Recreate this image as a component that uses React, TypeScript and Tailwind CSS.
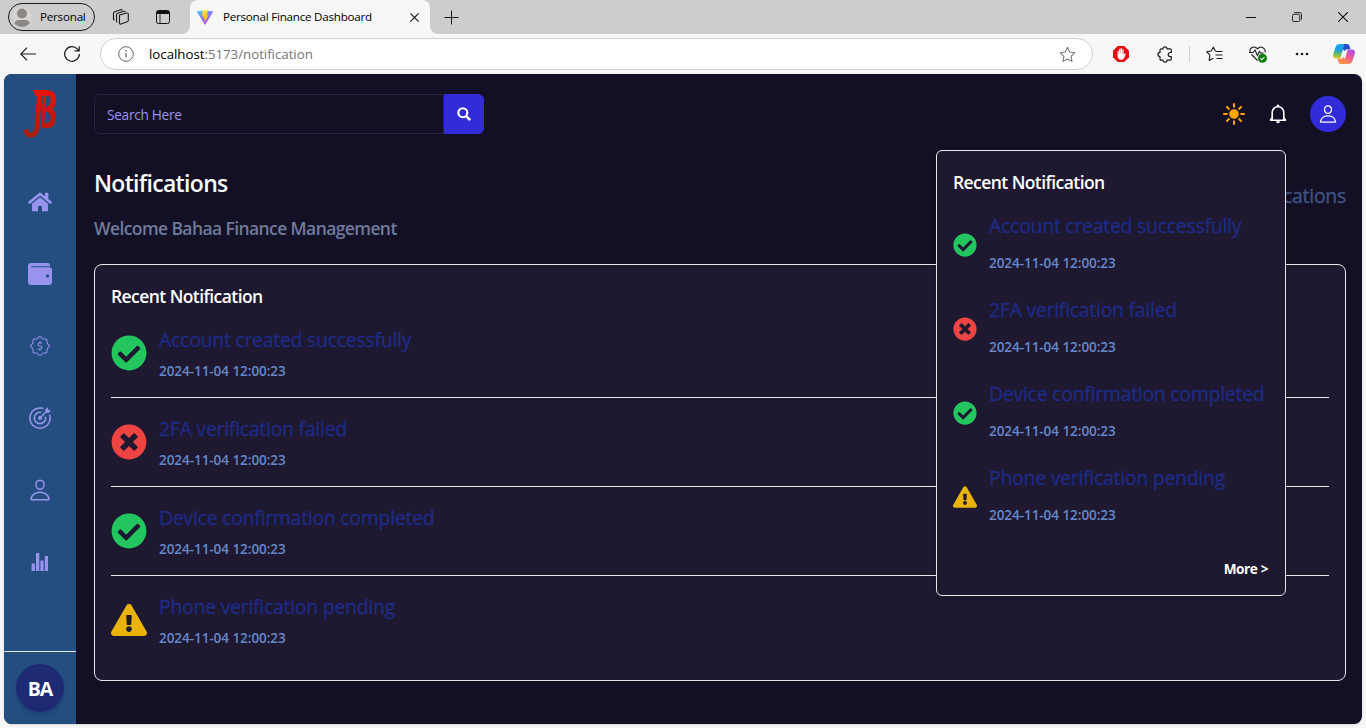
import type { ReactNode } from "react";
import { FaHome, FaCheckCircle, FaTimesCircle, FaExclamationTriangle } from "react-icons/fa";
import { IoPersonOutline, IoSunnySharp } from "react-icons/io5";
import { GoGoal } from "react-icons/go";
import { CiBadgeDollar } from "react-icons/ci";

type Kind = "success" | "error" | "warning";

const notifications: { title: string; date: string; kind: Kind }[] = [
  { title: "Account created successfully", date: "2024-11-04 12:00:23", kind: "success" },
  { title: "2FA verification failed", date: "2024-11-04 12:00:23", kind: "error" },
  { title: "Device confirmation completed", date: "2024-11-04 12:00:23", kind: "success" },
  { title: "Phone verification pending", date: "2024-11-04 12:00:23", kind: "warning" },
];

function StatusIcon({ kind, size }: { kind: Kind; size: number }) {
  if (kind === "success") return <FaCheckCircle size={size} className="shrink-0 text-[#22c55e]" />;
  if (kind === "error") return <FaTimesCircle size={size} className="shrink-0 text-[#ef4444]" />;
  return <FaExclamationTriangle size={size} className="shrink-0 text-[#eab308]" />;
}

function TabBar() {
  return (
    <div className="flex h-[34px] shrink-0 items-center bg-[#cdcdcd] text-black">
      <div className="ml-2 flex h-7 w-[87px] items-center rounded-full border border-[#1b1b1b] pl-[3px]">
        <svg width="20" height="20" viewBox="0 0 20 20">
          <defs>
            <clipPath id="avatar"><circle cx="10" cy="10" r="10" /></clipPath>
          </defs>
          <g clipPath="url(#avatar)">
            <rect width="20" height="20" fill="#d8d4d0" />
            <circle cx="10" cy="6.5" r="5" fill="#8a8886" />
            <path d="M2 18c0-3 2-5 5-5h6c3 0 5 2 5 5v2H2z" fill="#8a8886" />
          </g>
        </svg>
        <span className="ml-2 text-[11.6px] tracking-[-0.2px]">Personal</span>
      </div>
      <svg className="ml-[17px]" width="18" height="18" viewBox="0 0 18 18" fill="none" stroke="#1b1b1b" strokeWidth="1.1" strokeLinejoin="round">
        <path d="M7.5 7 15 5a1 1 0 0 1 1.3.8v6.700a1.5 1.5 0 0 1-1 1.3L9 16a1 1 0 0 1-1.5-1z" />
        <path d="M5.500 14a1 1 0 0 1-1-1V6.500a1.500 1.500 0 0 1 1-1.300L12 3.300a1 1 0 0 1 1.300.8M2.500 12a1 1 0 0 1-1-1V5a1.500 1.500 0 0 1 1-1.300L9 1.700a1 1 0 0 1 1.300.8" />
      </svg>
      <svg className="ml-[26px]" width="14" height="14" viewBox="0 0 14 14" fill="none" stroke="#111">
        <rect x="0.5" y="0.5" width="13" height="13" rx="2" />
        <path d="M1 2.500h12" strokeWidth="3" />
        <path d="M4 4v9" strokeWidth="0.8" />
      </svg>
      <div className="relative ml-5 flex h-full w-[240px] items-center rounded-t-lg bg-[#f7f7f7]">
        <svg className="absolute bottom-0 -left-2" width="8" height="8"><path d="M8 0v8H0a8 8 0 0 0 8-8" fill="#f7f7f7" /></svg>
        <svg className="absolute -right-2 bottom-0" width="8" height="8"><path d="M0 0v8h8a8 8 0 0 1-8-8" fill="#f7f7f7" /></svg>
        <svg className="ml-[7px]" width="16" height="16" viewBox="0 0 16 16">
          <defs>
            <linearGradient id="v1" x1="0" y1="0" x2="0.6" y2="1">
              <stop stopColor="#41d1ff" /><stop offset="1" stopColor="#bd34fe" />
            </linearGradient>
            <linearGradient id="v2" x1="0" y1="0" x2="0" y2="1">
              <stop stopColor="#ffea83" /><stop offset="0.2" stopColor="#ffdd35" /><stop offset="1" stopColor="#ffa800" />
            </linearGradient>
          </defs>
          <path d="M.3 2.300 8 1.400l7.700.9c.3 0 .4.4.3.6L8.300 15.500c-.1.300-.5.300-.6 0L0 2.900c-.1-.2 0-.6.3-.6" fill="url(#v1)" />
          <path d="m11 .4-5.500 1.100-.4 6.300 1.700-.3-.4 2.500 1.400-.4-.4 4.500 4.300-8.100-2 .4z" fill="url(#v2)" />
        </svg>
        <span className="ml-[10px] text-[11.6px] tracking-[-0.22px] whitespace-nowrap">Personal Finance Dashboard</span>
        <svg className="mr-[11px] ml-auto" width="9" height="9" viewBox="0 0 9 9" stroke="#1b1b1b" strokeWidth="1.2"><path d="m.4.4 8.200 8.200M8.600.4.4 8.600" /></svg>
      </div>
      <svg className="ml-[14px]" width="15" height="15" viewBox="0 0 15 15" stroke="#111"><path d="M.5 7.500h14M7.500.5v14" /></svg>
      <div className="ml-auto flex">
        <Slot><svg width="10" height="10" stroke="#111"><path d="M0 5.500h10" /></svg></Slot>
        <Slot>
          <svg width="10" height="10" viewBox="0 0 11 11" fill="none" stroke="#111">
            <rect x="0.5" y="2.500" width="8" height="8" rx="1.500" />
            <path d="M2.500.5H8A2.500 2.500 0 0 1 10.500 3v5.500" />
          </svg>
        </Slot>
        <Slot><svg width="10" height="10" viewBox="0 0 10 10" stroke="#111" strokeWidth="1.1"><path d="m0 0 10 10M10 0 0 10" /></svg></Slot>
      </div>
    </div>
  );
}

function Slot({ children }: { children: ReactNode }) {
  return <div className="flex w-[46px] items-center justify-center">{children}</div>;
}

function ToolSlot({ children }: { children: ReactNode }) {
  return <div className="flex w-11 shrink-0 items-center justify-center">{children}</div>;
}

const starPath = "M8 1.200l2.100 4.400 4.700.7-3.400 3.400.8 4.800L8 12.200l-4.200 2.300.8-4.800L1.200 6.300l4.700-.7z";

function Toolbar() {
  return (
    <div className="flex h-10 shrink-0 items-center bg-[#f7f7f7]">
      <svg className="ml-5" width="16" height="14" viewBox="0 0 16 14" fill="none" stroke="#1b1b1b" strokeWidth="1.1"><path d="M16 7H.8M7 .6.8 7 7 13.400" /></svg>
      <svg className="ml-7" width="16" height="16" viewBox="0 0 16 16" fill="none" stroke="#1b1b1b" strokeWidth="1.2">
        <path d="M15.300 8A7.300 7.300 0 1 1 13.500 3.200L15 4.800M15.200.3v4.600h-4.600" />
      </svg>
      <div className="ml-5 flex h-8 w-[993px] shrink-0 items-center rounded-full border border-[#d0d0d0] bg-white pr-4 pl-[17px]">
        <svg width="16" height="16" viewBox="0 0 16 16" fill="none" stroke="#6b6b6b">
          <circle cx="8" cy="8" r="7.300" /><path d="M8 7v4.500" strokeWidth="1.300" /><path d="M8 4.200v1.500" strokeWidth="1.500" />
        </svg>
        <span className="ml-[15px] pt-[2px] text-[13.3px] tracking-[-0.03px] text-[#767676]"><span className="text-black">localhost</span>:5173/notification</span>
        <svg className="ml-auto" width="17" height="17" viewBox="0 0 16 16" fill="none" stroke="#777" strokeLinejoin="round"><path d={starPath} /></svg>
      </div>
      <div className="ml-[6px] flex items-center">
        <ToolSlot>
          <svg width="16" height="16" viewBox="0 0 16 16">
            <path d="M4.700 0h6.600L16 4.700v6.600L11.300 16H4.700L0 11.300V4.700z" fill="#e40d12" />
            <path d="M4.500 5v4.500c0 2.500 1.300 4.200 3.700 4.200 2 0 2.900-1.300 3.700-3.500l.9-2.500-1.200-.3-1 1.600V3.300H9.400v3.900H9V2.300H7.700v4.900h-.3V3H6.100v4.700h-.4V5z" fill="#fff" />
          </svg>
        </ToolSlot>
        <ToolSlot>
          <svg width="16" height="17" viewBox="0 0 16 17" fill="none" stroke="#1b1b1b" strokeWidth="1.2" strokeLinejoin="round">
            <path d="M6 2.800a2 2 0 0 1 4 0h3a1.300 1.300 0 0 1 1.300 1.300V6.500h-1a2 2 0 0 0 0 4.200h1v2.200a1.300 1.300 0 0 1-1.300 1.300h-3a2 2 0 0 1-4 0H4.300A1.300 1.300 0 0 1 3 12.900v-2.300a2.100 2.100 0 0 1 0-4.200V4.100a1.300 1.300 0 0 1 1.300-1.300z" />
          </svg>
        </ToolSlot>
        <div className="mr-[2px] ml-[2px] h-4 w-px bg-[#cfcfcf]" />
        <ToolSlot>
          <svg width="17" height="16" viewBox="0 0 17 16" fill="none" stroke="#1b1b1b" strokeWidth="1.1" strokeLinejoin="round">
            <path d="M10 5.200 9.400 5 7.300 1.200 5.200 5l-4.500.8 3.200 3.400-.7 5.200 4.200-2.200M10 5.500h6.500M9.500 9h7M10.500 12.500h6" />
          </svg>
        </ToolSlot>
        <ToolSlot>
          <svg width="18" height="17" viewBox="0 0 18 17" fill="none" stroke="#1b1b1b" strokeWidth="1.1">
            <path d="M1.200 6C-.2 2.500 5.200-1.200 8.500 2.800c3.300-4 8.700-.3 7.500 3.700M2.500 8.500l6 6M0 6.500h4l2-2.500 2.500 5.500 2-4 1 1.500h3" />
            <circle cx="13.500" cy="12.300" r="4.500" fill="#107c10" stroke="none" />
            <path d="m11.500 12.400 1.400 1.400 2.600-2.800" stroke="#fff" />
          </svg>
        </ToolSlot>
        <ToolSlot>
          <svg width="14" height="4" fill="#1b1b1b"><circle cx="2" cy="2" r="1.300" /><circle cx="7" cy="2" r="1.300" /><circle cx="12" cy="2" r="1.300" /></svg>
        </ToolSlot>
        <div className="flex w-[40px] shrink-0 justify-center">
          <svg width="22" height="20" viewBox="0 0 22 20">
            <defs>
              <linearGradient id="c1" x1="0.3" y1="0" x2="0.2" y2="1"><stop stopColor="#1aa7ee" /><stop offset="0.4" stopColor="#1b9ddc" /><stop offset="0.7" stopColor="#66c15c" /><stop offset="1" stopColor="#f2c414" /></linearGradient>
              <linearGradient id="c2" x1="0.8" y1="0" x2="0.3" y2="1"><stop stopColor="#a14de8" /><stop offset="0.5" stopColor="#ee5a92" /><stop offset="1" stopColor="#ff9a52" /></linearGradient>
            </defs>
            <path d="M6.500 0h8L10 5.500 7.300 14.500H3C.6 14.500-.3 12.700.3 10L2.700 2.800C3.300 1 4.700 0 6.500 0" fill="url(#c1)" />
            <path d="M11.500 0h2.500c1.500 0 2.200 1 2.700 2.500l.8 2.700h-3c-1.500 0-2.200.5-2.700 2L9.800 5z" fill="#2450c8" />
            <path d="M15.500 20h-8L12 14.500l2.700-9H19c2.400 0 3.300 1.800 2.700 4.500l-2.400 7.200c-.6 1.800-2 2.800-3.800 2.800" fill="url(#c2)" />
            <path d="M10.500 20H8c-1.500 0-2.200-1-2.700-2.500l-.8-2.700h3c1.500 0 2.200-.5 2.700-2l2 2.200z" fill="#ff8a4c" />
          </svg>
        </div>
      </div>
    </div>
  );
}

function Logo() {
  return (
    <svg width="36" height="50" viewBox="0 0 36 50" fill="none" stroke="url(#logo)" strokeLinejoin="round">
      <defs>
        <linearGradient id="logo" gradientUnits="userSpaceOnUse" x1="0" y1="0" x2="0" y2="50"><stop stopColor="#e81600" /><stop offset="1" stopColor="#a81c10" /></linearGradient>
      </defs>
      <path d="M10.800 2H26v6H13.500z" fill="url(#logo)" stroke="none" />
      <path d="M25 4.800Q31.300 4.800 31.300 11.500 31.300 19 26 21.500 31.300 23.500 31.300 29.500 31.300 37.600 24.500 37.600H20" strokeWidth="5.3" />
      <path d="M22.500 8.500 20.500 39.500" strokeWidth="3" />
      <path d="M21.500 21.500H27" strokeWidth="4.2" />
      <path d="M17.500 7 15 39.500C14.500 45 11.500 47.300 8 47.300Q4.500 47 4.300 41.500" strokeWidth="4.8" />
    </svg>
  );
}

function WalletIcon() {
  return (
    <svg width="24" height="22" viewBox="0 0 24 22" fill="currentColor">
      <path
        fillRule="evenodd"
        d="M3 0h16.500A2.500 2.500 0 0 1 22 2.500v.7H3.600a.5.5 0 0 0 0 1H21a3 3 0 0 1 3 3V19a3 3 0 0 1-3 3H3a3 3 0 0 1-3-3V3a3 3 0 0 1 3-3M19.500 11.200a1.700 1.700 0 1 0 0 3.400 1.700 1.700 0 0 0 0-3.400"
      />
    </svg>
  );
}

function StatsIcon() {
  return (
    <svg width="18" height="18" viewBox="0 0 18 18" fill="currentColor">
      <path d="M.6 10.500h3.300V18H.6zM5 0h3.300v18H5zM9.400 7.500h3.200V18H9.400zM13.800 3H17v15h-3.200z" />
    </svg>
  );
}

function Sidebar() {
  const items = [
    <FaHome size={24} />,
    <WalletIcon />,
    <CiBadgeDollar size={24} />,
    <GoGoal size={24} />,
    <IoPersonOutline size={24} />,
    <StatsIcon />,
  ];
  return (
    <aside className="flex w-[72px] shrink-0 flex-col items-center bg-[#244d80] text-[#9894ee]">
      <div className="mt-[14px] h-[50px]"><Logo /></div>
      <nav className="mt-7 flex flex-col">
        {items.map((icon, i) => (
          <div key={i} className="flex h-[72px] items-center justify-center">{icon}</div>
        ))}
      </nav>
      <div className="mt-auto flex h-[73px] w-full items-center justify-center border-t border-[#e5e7eb]">
        <div className="flex size-12 items-center justify-center rounded-full bg-[#1f2a74] pt-[2px] text-[19.5px] font-bold tracking-[-1px] text-white shadow-md">BA</div>
      </div>
    </aside>
  );
}

function Header() {
  return (
    <header className="flex h-20 shrink-0 items-center">
      <div className="flex h-10 w-[390px]">
        <div className="flex h-10 w-[350px] items-center rounded-l-md border border-[#27243d] pt-[2px] pl-3 text-[13.7px] tracking-[-0.3px] text-[#9894ee]">Search Here</div>
        <div className="flex w-10 items-center justify-center rounded-r-md bg-[#312cd8]">
          <svg width="14" height="14" viewBox="0 0 14 14" fill="none" stroke="#fff" strokeWidth="2.1"><circle cx="5.800" cy="5.700" r="4.500" /><path d="m9 9 4.200 4.100" strokeWidth="2.500" /></svg>
        </div>
      </div>
      <IoSunnySharp size={24} className="ml-auto text-[#ffa500]" />
      <svg className="ml-[22px]" width="20" height="20" viewBox="0 0 20 20" fill="none" stroke="#fff" strokeWidth="1.6">
        <path d="M4.200 15.500V8.500a5.800 5.800 0 0 1 11.600 0v7M2 16.200h16" />
        <path d="M8.500 2.500a1.500 2 0 0 1 3 0zM8 17.200h4a2 2 0 0 1-4 0" fill="#fff" stroke="none" />
        <path d="M2 16.300 4.300 13.500M18 16.300l-2.300-2.800" strokeWidth="1.200" />
      </svg>
      <div className="ml-[22px] flex size-9 items-center justify-center rounded-full bg-[#312cd8] text-white"><IoPersonOutline size={20} /></div>
    </header>
  );
}

function NotificationPopup() {
  return (
    <div className="absolute top-[76px] right-[76px] flex h-[446px] w-[350px] flex-col rounded-md border border-[#e5e7eb] bg-[#1e1931] px-4 shadow-md">
      <h4 className="mt-[17px] text-[17.5px] leading-7 font-semibold tracking-[-0.57px] text-white">Recent Notification</h4>
      <ul className="mt-[7px]">
        {notifications.map((n) => (
          <li key={n.title} className="flex h-[84px] items-center gap-3">
            <StatusIcon kind={n.kind} size={24} />
            <div className="pb-[6px]">
              <p className="text-[19.5px] leading-7 tracking-[-0.29px] whitespace-nowrap text-[#1f2b86] [-webkit-text-stroke:0.3px_#1f2b86]">{n.title}</p>
              <p className="mt-[13px] text-[13.5px] leading-5 font-semibold tracking-[-0.05px] text-[#6688c8]">{n.date}</p>
            </div>
          </li>
        ))}
      </ul>
      <div className="mt-[20px] pr-px text-right text-[13.6px] leading-5 font-bold tracking-[-0.4px] text-white">More &gt;</div>
    </div>
  );
}

export default function App() {
  return (
    <div className="flex h-[728px] w-[1366px] flex-col overflow-hidden bg-[#f7f7f7] font-['Open_Sans',sans-serif]">
      <TabBar />
      <Toolbar />
      <div className="relative mx-1 flex h-[650px] shrink-0 overflow-hidden rounded-lg bg-[#131026] shadow-sm">
        <Sidebar />
        <main className="flex flex-1 flex-col pr-4 pl-[18px]">
          <Header />
          <div className="flex justify-between">
            <div className="pt-[13px]">
              <h2 className="text-[23px] leading-8 font-semibold tracking-[-0.68px] text-white">Notifications</h2>
              <p className="mt-[15px] text-[17.5px] leading-7 font-semibold tracking-[-0.6px] text-[#6f7a9b]">Welcome Bahaa Finance Management</p>
            </div>
            <p className="pt-[28px] text-[19.5px] leading-7 tracking-[-0.29px] text-[#3f5588] [-webkit-text-stroke:0.3px_#3f5588]">Notifications</p>
          </div>
          <section className="mt-[22px] h-[417px] rounded-lg border border-[#e5e7eb] bg-[#1e1931] px-4 pt-[17px]">
            <h4 className="text-[17.5px] leading-7 font-semibold tracking-[-0.57px] text-white">Recent Notification</h4>
            <ul className="-mt-px">
              {notifications.map((n) => (
                <li key={n.title} className="flex h-[89px] items-center gap-3 border-b border-[#e5e7eb] last:border-transparent">
                  <StatusIcon kind={n.kind} size={36} />
                  <div>
                    <p className="text-[19.5px] leading-7 tracking-[-0.29px] text-[#1f2b86] [-webkit-text-stroke:0.3px_#1f2b86]">{n.title}</p>
                    <p className="mt-[7px] text-[13.5px] leading-5 font-semibold tracking-[-0.05px] text-[#6688c8]">{n.date}</p>
                  </div>
                </li>
              ))}
            </ul>
          </section>
        </main>
        <NotificationPopup />
      </div>
    </div>
  );
}
